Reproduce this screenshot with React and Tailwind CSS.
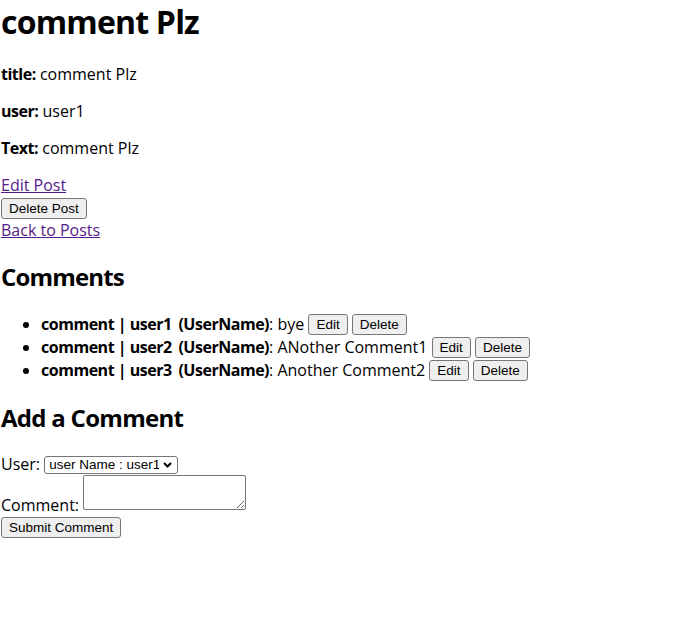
import React from "react";

function Btn({ children, className = "" }) {
  return (
    <button
      type="button"
      className={
        "inline-block h-[21px] px-[7px] align-top bg-[#efefef] border border-[#767676] rounded-[3px] text-[13.5px] leading-[19px] text-black font-['Liberation_Sans',Arial,sans-serif] " +
        className
      }
    >
      {children}
    </button>
  );
}

const comments = [
  { user: "user1", text: "bye" },
  { user: "user2", text: "ANother Comment1" },
  { user: "user3", text: "Another Comment2" },
];

const B = ({ children }) => <strong className="font-bold tracking-[-0.03em]">{children}</strong>;

export default function App() {
  return (
    <div className="pl-px bg-white text-black text-[16px] leading-[21px] font-['Open_Sans','Noto_Sans_CJK_KR',sans-serif] min-h-[633px]">
      <h1 className="text-[32px] font-bold tracking-[-0.025em] leading-[43px] mb-[21px]">comment Plz</h1>
      <p className="mb-[16px]">
        <B>title:</B> comment Plz
      </p>
      <p className="mb-[16px]">
        <B>user:</B> user1
      </p>
      <p className="mb-[16px]">
        <B>Text:</B> comment Plz
      </p>
      <div>
        <a href="#" className="text-[#551a8b] underline">
          Edit Post
        </a>
      </div>
      <div className="h-[24px] pt-[2px]">
        <Btn>Delete Post</Btn>
      </div>
      <div>
        <a href="#" className="text-[#551a8b] underline">
          Back to Posts
        </a>
      </div>

      <h2 className="text-[24px] font-bold tracking-[-0.035em] leading-[32px] mt-[20px] mb-[20px]">Comments</h2>
      <ul className="list-disc pl-[40px]">
        {comments.map((c) => (
          <li key={c.user} className="h-[23px] leading-[23px]">
            <B>
              comment | {c.user}
              <span className="ml-[3px]"> (UserName)</span>
            </B>
            : {c.text} <Btn className="mt-px">Edit</Btn> <Btn className="mt-px">Delete</Btn>
          </li>
        ))}
      </ul>

      <h2 className="text-[24px] font-bold tracking-[-0.03em] leading-[32px] mt-[20px] mb-[20px]">Add a Comment</h2>
      <form onSubmit={(e) => e.preventDefault()}>
        <div className="h-[21px]">
          <label>
            User:{" "}
            <span className="relative inline-block align-top mt-[2px]">
              <select className="appearance-none block w-[134px] h-[18px] pl-[4px] pr-[18px] bg-white border border-[#767676] rounded-[3px] text-[13.5px] leading-[16px] text-black font-['Liberation_Sans',Arial,sans-serif]">
                <option>user Name : user1</option>
                <option>user Name : user2</option>
                <option>user Name : user3</option>
              </select>
              <svg
                className="pointer-events-none absolute right-[6px] top-[6px]"
                width="9"
                height="6"
                viewBox="0 0 9 6"
                fill="none"
              >
                <path d="M1 1 L4.5 4.5 L8 1" stroke="#000" strokeWidth="2" />
              </svg>
            </span>
          </label>
        </div>
        <div className="flex items-end">
          <label className="leading-[21px]">Comment:</label>
          <textarea className="ml-[4px] mb-[6px] w-[163px] h-[35px] p-[2px] bg-white border border-[#767676] rounded-[2px] text-[13.333px] font-['Liberation_Mono',monospace]" />
        </div>
        <div className="mt-px">
          <Btn>Submit Comment</Btn>
        </div>
      </form>
    </div>
  );
}
